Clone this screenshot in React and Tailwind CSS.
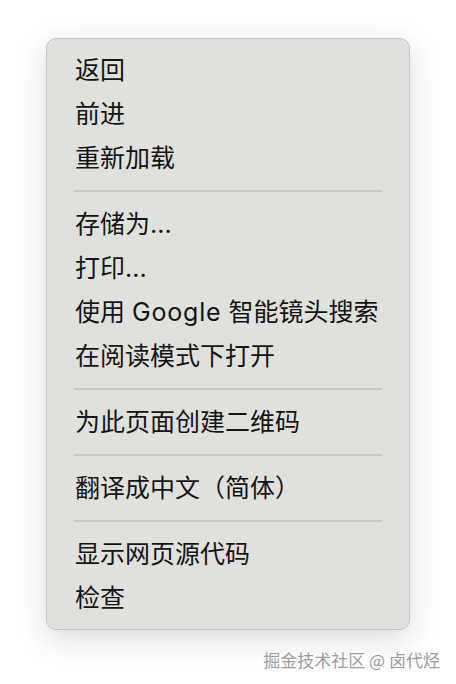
import React from "react";

const sections = [
  ["返回", "前进", "重新加载"],
  ["存储为...", "打印...", "google", "在阅读模式下打开"],
  ["为此页面创建二维码"],
  ["翻译成中文（简体）"],
  ["显示网页源代码", "检查"],
];

function Label({ t }) {
  if (t === "google") {
    return (
      <span>
        使用 <span className="tracking-[0.8px]">Google</span> 智能镜头搜索
      </span>
    );
  }
  return <span>{t}</span>;
}

export default function App() {
  return (
    <div className="relative w-[456px] h-[684px] bg-white overflow-hidden pt-[38px] pl-[46px]">
      <div className="w-[364px] h-[592px] rounded-[10px] bg-[#e0e0dc] border border-[#c4c4c2] shadow-[0_8px_30px_rgba(0,0,0,0.16)] py-[9px] font-['Inter','Noto_Sans_CJK_SC',sans-serif] text-[25px] text-[#141414]">
        {sections.map((items, si) => (
          <div key={si}>
            {si > 0 && (
              <div className="h-[22px] pt-[10px] px-[27px]">
                <div className="h-[1.5px] bg-[#c7c7c4]" />
              </div>
            )}
            {items.map((t) => (
              <div key={t} className="h-[44px] flex items-center pl-[28px] leading-none whitespace-nowrap">
                <Label t={t} />
              </div>
            ))}
          </div>
        ))}
      </div>
      <div className="absolute right-[16px] top-[651px] text-[17px] leading-none text-[#9c9c9c] font-['Noto_Sans_CJK_SC',sans-serif] [text-shadow:0_0_2px_#ffffff,0_0_1px_#ffffff] whitespace-nowrap">
        掘金技术社区 @ 卤代烃
      </div>
    </div>
  );
}
